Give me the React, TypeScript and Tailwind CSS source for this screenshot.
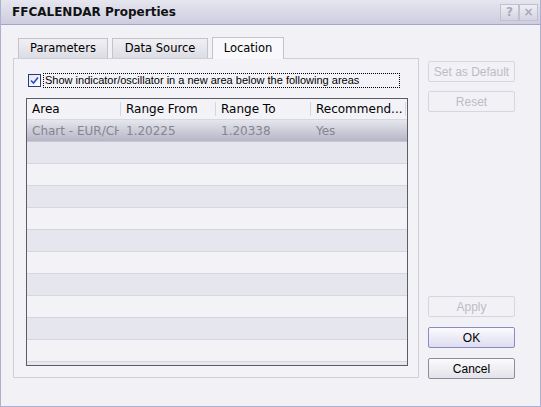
import React from 'react';

const columns = ['Area', 'Range From', 'Range To', 'Recommend...'];

const rows = Array.from({ length: 11 });

function TitleButton({ label }: { label: string }) {
  return (
    <div className="w-[19px] h-[17px] flex items-center justify-center border border-[#c0c0d4] bg-gradient-to-b from-[#eeeef4] to-[#d4d4e2] text-[#a8a8b8] text-[12px] font-bold leading-none">
      {label}
    </div>
  );
}

function Tab({ label, active, width }: { label: string; active?: boolean; width: string }) {
  return (
    <div
      className={
        active
          ? `${width} h-[22px] -mb-px relative z-10 flex items-center justify-center border border-b-0 border-[#c4c4cc] bg-[#f8f8fb] text-black`
          : `${width} h-[20px] flex items-center justify-center border border-b-0 border-[#c4c4cc] bg-gradient-to-b from-[#f0f0f4] to-[#dcdce4] text-black`
      }
    >
      {label}
    </div>
  );
}

function DlgButton({ label, disabled, primary }: { label: string; disabled?: boolean; primary?: boolean }) {
  const base = 'w-[87px] h-[21px] flex items-center justify-center rounded-[2px] text-[12px] font-["Liberation_Sans",Arial,sans-serif]';
  if (disabled) {
    return <div className={`${base} border border-[#d6d6de] bg-[#f2f2f6] text-[#bcbcc6]`}>{label}</div>;
  }
  if (primary) {
    return (
      <div className={`${base} border border-[#8a8ac4] bg-gradient-to-b from-[#fbfbfe] to-[#dcdcf0] text-black`}>{label}</div>
    );
  }
  return (
    <div className={`${base} border border-[#8c8c9c] bg-gradient-to-b from-[#fbfbfd] to-[#e2e2ea] text-black`}>{label}</div>
  );
}

export default function App() {
  return (
    <div className="w-[541px] h-[407px] flex flex-col bg-[#f1f1f6] border-l border-r border-b border-[#aeb0d0] font-['DejaVu_Sans',Verdana,sans-serif] text-[11.5px] overflow-hidden">
      {/* title bar */}
      <div className="h-[25px] shrink-0 flex items-center justify-between pl-[11px] pr-[2px] bg-gradient-to-b from-[#e6e6ef] to-[#cdcde0] border-b border-[#a4a6c6]">
        <span className="font-bold text-[12px] text-[#111]">FFCALENDAR Properties</span>
        <div className="flex">
          <TitleButton label="?" />
          <TitleButton label="×" />
        </div>
      </div>

      {/* body */}
      <div className="flex pl-[12px] pt-[12px]">
        <div className="w-[406px] flex flex-col">
          <div className="h-[21px] flex items-end gap-[4px] pl-[5px]">
            <Tab label="Parameters" width="w-[90px]" />
            <Tab label="Data Source" width="w-[96px]" />
            <Tab label="Location" width="w-[72px]" active />
          </div>
          <div className="h-[320px] border border-[#cfcfd8] bg-[#f2f2f7] pl-[12px] pr-[10px] pt-[14px]">
            <div className="flex items-center h-[15px] ml-[2px]">
              <div className="w-[13px] h-[13px] border border-[#2a3a7a] bg-gradient-to-br from-[#e4e4f0] to-white flex items-center justify-center">
                <svg width="9" height="9" viewBox="0 0 9 9">
                  <path d="M1 4.5 L3.5 7 L8 1.5" fill="none" stroke="#2a4ac8" strokeWidth="1.6" />
                </svg>
              </div>
              <div className="ml-[2px] h-[15px] w-[357px] flex items-center border border-dotted border-black px-[1px] font-['Liberation_Sans',Arial,sans-serif] text-[11px] leading-none text-black">
                Show indicator/oscillator in a new area below the following areas
              </div>
            </div>

            <div className="mt-[10px] w-[382px] h-[268px] border border-[#5c5c64] bg-[#f2f2f7] overflow-hidden text-[12px]">
              {/* header */}
              <div className="flex h-[21px] border-b border-[#d8d8e0] bg-[#f2f2f7]">
                {columns.map((c) => (
                  <div key={c} className="w-[95px] flex items-center pl-[5px] border-r border-[#d6d6de] my-[3px] first:w-[94px] whitespace-nowrap overflow-hidden text-black">
                    {c}
                  </div>
                ))}
              </div>
              {/* selected row */}
              <div className="flex h-[22px] border-b border-[#c8c8d4] bg-gradient-to-b from-[#e6e6ee] to-[#b6b6c6] text-[#85858f]">
                <div className="w-[94px] pl-[5px] pr-[2px] flex items-center">
                  <span className="block whitespace-nowrap overflow-hidden">Chart - EUR/CHF</span>
                </div>
                <div className="w-[95px] pl-[5px] flex items-center">1.20225</div>
                <div className="w-[95px] pl-[5px] flex items-center">1.20338</div>
                <div className="w-[95px] pl-[5px] flex items-center">Yes</div>
              </div>
              {rows.map((_, i) => (
                <div
                  key={i}
                  className={
                    i % 2 === 0
                      ? 'h-[22px] border-b border-[#d6d6de] bg-[#e6e6ee]'
                      : 'h-[22px] border-b border-[#d6d6de] bg-[#f2f2f7]'
                  }
                />
              ))}
            </div>
          </div>
        </div>

        {/* right buttons */}
        <div className="ml-[9px] pt-[24px] flex flex-col">
          <DlgButton label="Set as Default" disabled />
          <div className="mt-[9px]">
            <DlgButton label="Reset" disabled />
          </div>
          <div className="mt-[184px] flex flex-col gap-[10px]">
            <DlgButton label="Apply" disabled />
            <DlgButton label="OK" primary />
            <DlgButton label="Cancel" />
          </div>
        </div>
      </div>
    </div>
  );
}
